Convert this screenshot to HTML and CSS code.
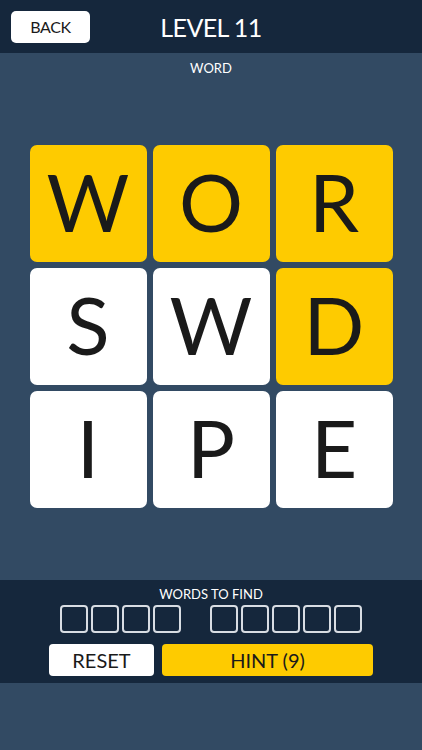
FILE: index.html
```html
<!DOCTYPE html>
<html>
<head>
<meta charset="utf-8">
<link rel="stylesheet" href="styles.css">
</head>
<body>
<div class="app">
  <header class="topbar">
    <div class="left"><button class="back">BACK</button></div>
    <div class="title">LEVEL 11</div>
    <div class="right"></div>
  </header>
  <main class="board">
    <div class="current">WORD</div>
    <div class="grid">
      <div class="tile sel">W</div>
      <div class="tile sel">O</div>
      <div class="tile sel">R</div>
      <div class="tile">S</div>
      <div class="tile">W</div>
      <div class="tile sel">D</div>
      <div class="tile">I</div>
      <div class="tile">P</div>
      <div class="tile">E</div>
    </div>
  </main>
  <section class="panel">
    <div class="find">WORDS TO FIND</div>
    <div class="words">
      <div class="word"><span></span><span></span><span></span><span></span></div>
      <div class="word"><span></span><span></span><span></span><span></span><span></span></div>
    </div>
    <div class="actions">
      <button class="reset">RESET</button>
      <button class="hint">HINT (9)</button>
    </div>
  </section>
  <div class="filler"></div>
</div>
</body>
</html>
```

FILE: styles.css
```css
* { box-sizing: border-box; }
html, body { margin: 0; padding: 0; }
body {
  width: 422px;
  height: 750px;
  background: #324a63;
  font-family: Lato, "Open Sans", "DejaVu Sans", sans-serif;
  overflow: hidden;
}
.app { display: flex; flex-direction: column; height: 750px; }
.topbar {
  height: 53px;
  background: #15273c;
  display: grid;
  grid-template-columns: 1fr auto 1fr;
  align-items: center;
}
.left { padding-left: 11px; display: flex; }
.back {
  width: 79px;
  height: 32px;
  background: #fff;
  border: none;
  border-radius: 5px;
  font-family: inherit;
  font-size: 16px;
  color: #1a1a1a;
  padding: 0;
  letter-spacing: -0.4px;
}
.title {
  color: #fff;
  font-size: 25px;
  font-weight: 400;
  letter-spacing: -0.6px;
  padding-top: 1px;
}
.board {
  height: 527px;
  display: flex;
  flex-direction: column;
  align-items: center;
}
.current {
  color: #fff;
  font-size: 13px;
  margin-top: 7px;
  height: 16px;
  line-height: 16px;
}
.grid {
  margin-top: 69px;
  display: grid;
  grid-template-columns: repeat(3, 117px);
  grid-auto-rows: 117px;
  gap: 6px;
}
.tile {
  background: #fff;
  border-radius: 7px;
  display: flex;
  align-items: center;
  justify-content: center;
  font-size: 80px;
  color: #1a1a1a;
  line-height: 1;
  padding-bottom: 6px;
}
.tile.sel { background: #fecb00; }
.panel {
  height: 103px;
  background: #15273c;
  display: flex;
  flex-direction: column;
  align-items: center;
}
.find {
  color: #fff;
  font-size: 13px;
  margin-top: 6px;
  height: 16px;
  line-height: 16px;
}
.words {
  display: flex;
  gap: 29px;
  margin-top: 3px;
}
.word { display: flex; gap: 3px; }
.word span {
  width: 28px;
  height: 28px;
  border: 2px solid #d8dde3;
  border-radius: 4px;
}
.actions {
  display: flex;
  gap: 8px;
  margin-top: 11px;
}
.actions button {
  height: 32px;
  border: none;
  border-radius: 4px;
  font-family: inherit;
  font-size: 20px;
  color: #1a1a1a;
  padding: 0;
}
.reset { width: 105px; background: #fff; }
.hint { width: 211px; background: #fecb00; }
.filler { flex: 1; }
```
